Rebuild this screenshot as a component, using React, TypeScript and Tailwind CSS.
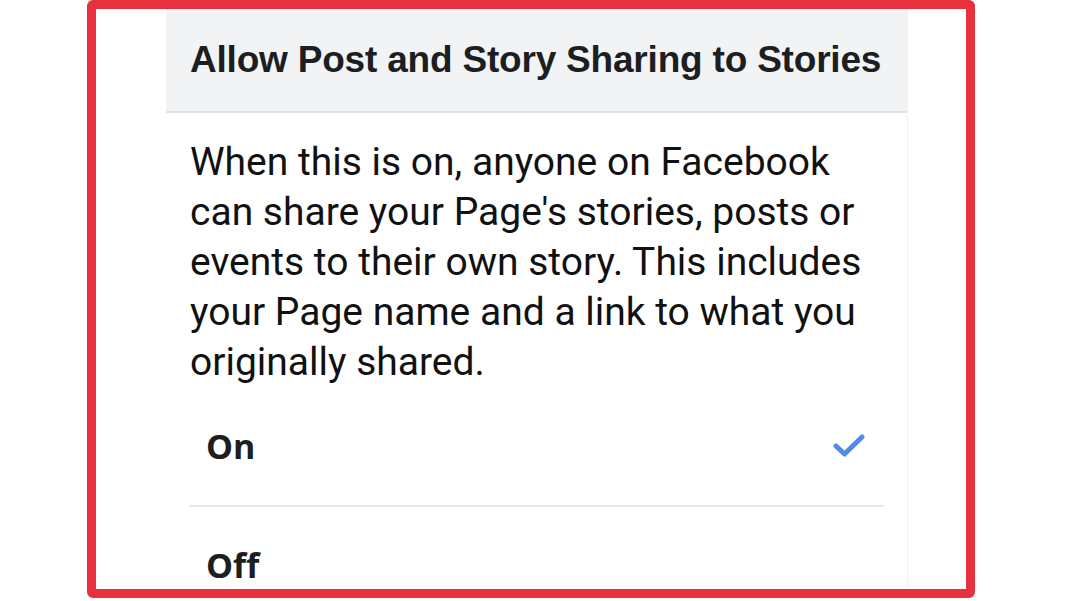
export default function App() {
  const options = [
    { label: 'On', selected: true },
    { label: 'Off', selected: false },
  ]

  return (
    <div className="w-[1068px] h-[601px] bg-white overflow-hidden">
      {/* red highlight frame */}
      <div className="ml-[87px] w-[888px] h-[598px] border-[9px] border-[#e8313f] rounded-[6px] overflow-hidden bg-white">
        <div className="ml-[70px] w-[742px] h-full bg-white border-r border-[#f0f1f3]">
          {/* header */}
          <div className="h-[104px] bg-[#f2f3f5] border-b-2 border-[#dfe1e4] flex items-center pl-[24px]">
            <h1
              className="text-[37px] font-bold text-[#1c1e21] tracking-[-0.2px]"
              style={{ fontFamily: '"Liberation Sans", Arial, sans-serif' }}
            >
              Allow Post and Story Sharing to Stories
            </h1>
          </div>

          {/* description */}
          <p
            className="pt-[24px] pl-[24px] pr-[30px] text-[39px] leading-[50px] text-[#111111]"
            style={{ fontFamily: 'Roboto, sans-serif' }}
          >
            When this is on, anyone on Facebook can share your Page's stories, posts or
            events to their own story. This includes your Page name and a link to what you
            originally shared.
          </p>

          {/* options */}
          <div className="mx-[23px]">
            {options.map((o, i) => (
              <div
                key={o.label}
                className={`h-[118px] flex items-center justify-between pl-[17px] pr-[19px] ${
                  i > 0 ? 'border-t-2 border-[#e8e9eb]' : ''
                }`}
              >
                <span
                  className="text-[34px] font-bold text-[#1c1e21]"
                  style={{ fontFamily: '"Open Sans", sans-serif' }}
                >
                  {o.label}
                </span>
                {o.selected && (
                  <svg width="32" height="26" viewBox="0 0 32 26" fill="none">
                    <path
                      d="M3 13 L11.5 21 L29 4"
                      stroke="#4f8bea"
                      strokeWidth="5"
                      strokeLinecap="round"
                      strokeLinejoin="round"
                    />
                  </svg>
                )}
              </div>
            ))}
          </div>
        </div>
      </div>
    </div>
  )
}
